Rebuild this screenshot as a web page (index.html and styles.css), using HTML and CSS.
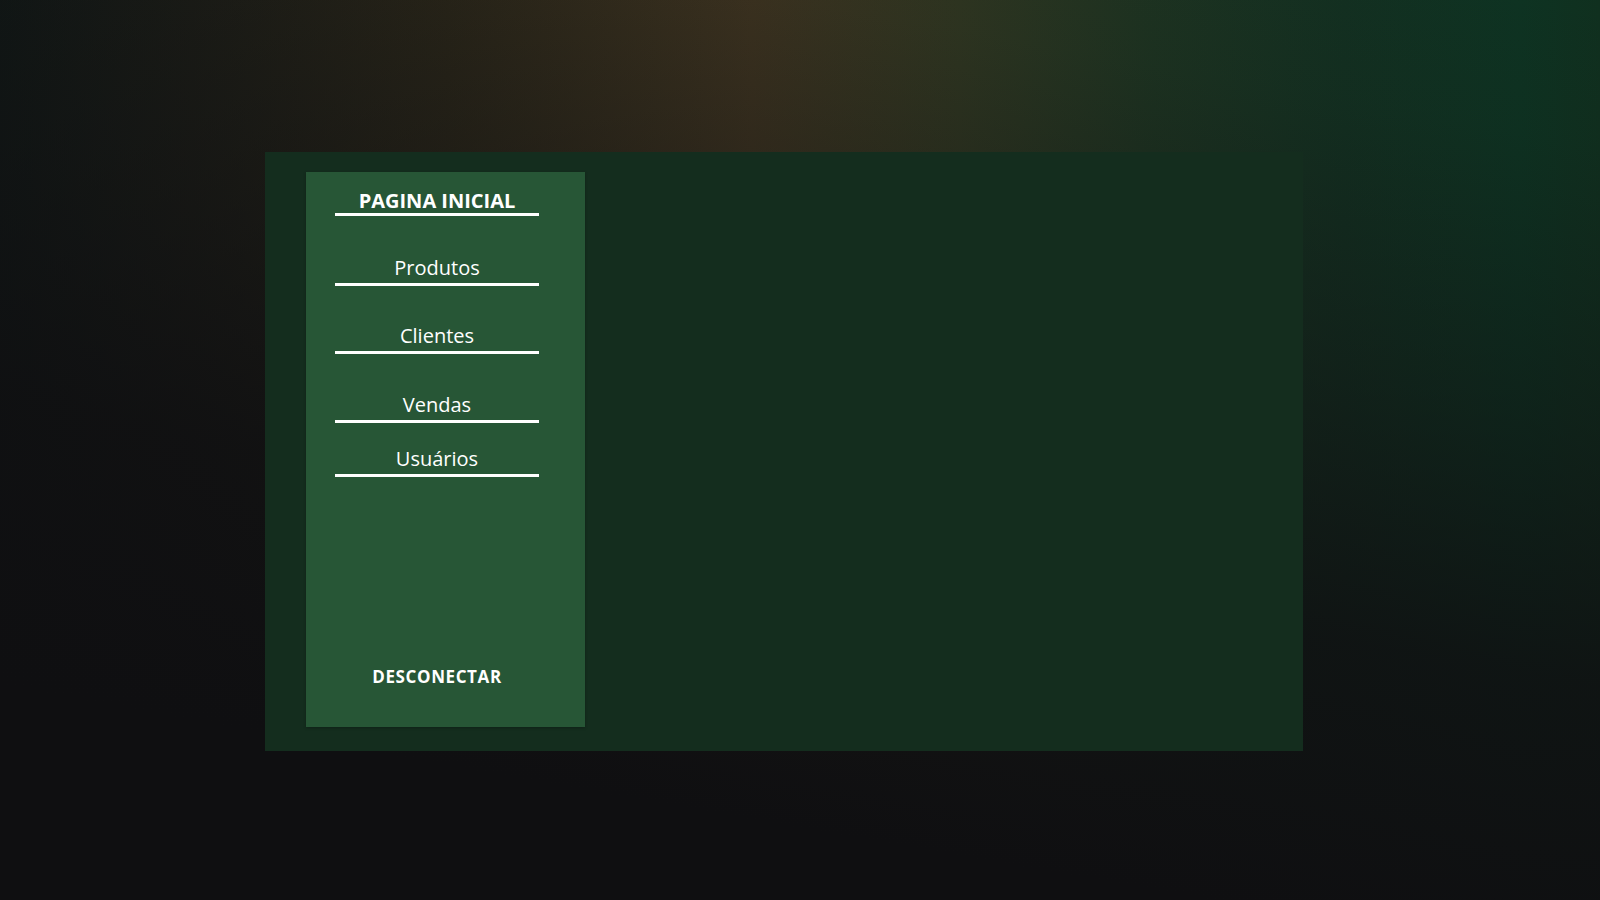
FILE: index.html
```html
<!DOCTYPE html>
<html lang="pt-BR">
<head>
<meta charset="utf-8">
<title>Pagina Inicial</title>
<link rel="stylesheet" href="styles.css">
</head>
<body>
<div class="page">
  <main class="panel">
    <aside class="sidebar">
      <nav class="nav">
        <a class="nav-item nav-home" href="#">PAGINA INICIAL</a>
        <a class="nav-item nav-produtos" href="#">Produtos</a>
        <a class="nav-item nav-clientes" href="#">Clientes</a>
        <a class="nav-item nav-vendas" href="#">Vendas</a>
        <a class="nav-item nav-usuarios" href="#">Usuários</a>
      </nav>
      <a class="logout" href="#">DESCONECTAR</a>
    </aside>
    <section class="content"></section>
  </main>
</div>
</body>
</html>
```
FILE: styles.css
```css
html, body {
  margin: 0;
  padding: 0;
  width: 1600px;
  height: 900px;
  overflow: hidden;
}
body {
  font-family: "Open Sans", "Noto Sans", sans-serif;
  color: #ffffff;
  background-color: #0f0f10;
  background-image:
    linear-gradient(190deg, rgba(15, 15, 17, 0) 0%, rgba(15, 15, 17, 0.08) 12%, rgba(15, 15, 17, 0.45) 36%, rgba(15, 15, 17, 0.85) 58%, #0f0f11 82%),
    linear-gradient(to right, #111816 0%, #1c1d17 12%, #2a2619 28%, #3d3320 47%, #2f3621 60%, #1d3321 72%, #133021 84%, #0e3322 95%, #10301f 100%);
}
.page {
  padding: 152px 0 0 265px;
}
.panel {
  width: 1038px;
  height: 599px;
  box-sizing: border-box;
  padding: 20px 0 24px 41px;
  background: #142d1e;
  display: flex;
}
.sidebar {
  width: 279px;
  height: 555px;
  box-sizing: border-box;
  background: #275636;
  padding: 17px 0 0 29px;
  display: flex;
  flex-direction: column;
  box-shadow: 0 1px 3px rgba(0, 0, 0, 0.25);
}
.nav {
  display: flex;
  flex-direction: column;
  width: 204px;
}
.nav-item {
  display: block;
  color: #ffffff;
  text-decoration: none;
  text-align: center;
  font-size: 20px;
  line-height: 24px;
  padding-bottom: 3px;
  border-bottom: 3px solid #ffffff;
}
.nav-home {
  font-weight: 700;
  padding-bottom: 0;
}
.nav-produtos { margin-top: 40px; }
.nav-clientes { margin-top: 38px; }
.nav-vendas { margin-top: 39px; }
.nav-usuarios { margin-top: 24px; }
.logout {
  margin-top: auto;
  width: 204px;
  text-align: center;
  color: #ffffff;
  text-decoration: none;
  font-weight: 700;
  font-size: 17px;
  letter-spacing: 0.6px;
  line-height: 24px;
  padding-bottom: 38px;
}
.content {
  flex: 1;
}
```
